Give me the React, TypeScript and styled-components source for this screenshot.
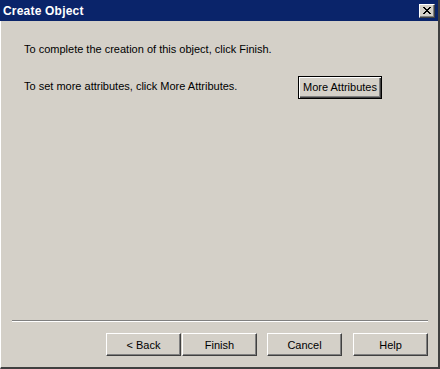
import React from 'react';
import styled, { createGlobalStyle } from 'styled-components';

const GlobalStyle = createGlobalStyle`
  html, body {
    margin: 0;
    padding: 0;
    background: #d4d0c8;
  }
  * {
    box-sizing: border-box;
  }
`;

const Window = styled.div`
  width: 440px;
  height: 369px;
  display: flex;
  flex-direction: column;
  background: #d4d0c8;
  border-left: 1px solid #ffffff;
  border-right: 2px solid #404040;
  border-bottom: 2px solid #404040;
  font-family: 'Liberation Sans', Arial, sans-serif;
  font-size: 11px;
  color: #000;
`;

const TitleBar = styled.div`
  height: 21px;
  margin-left: -1px;
  display: flex;
  align-items: center;
  justify-content: space-between;
  padding: 0 3px 0 3px;
  background: #0a246a;
`;

const Title = styled.span`
  color: #fff;
  font-weight: bold;
  font-size: 12px;
  letter-spacing: 0.2px;
`;

const CloseButton = styled.button`
  width: 16px;
  height: 14px;
  padding: 0;
  display: flex;
  align-items: center;
  justify-content: center;
  background: #d4d0c8;
  border: 1px solid;
  border-color: #fff #404040 #404040 #fff;
  box-shadow: inset -1px -1px 0 #808080;
`;

const Content = styled.div`
  flex: 1;
  padding: 20px 0 0 23px;
  display: flex;
  flex-direction: column;
`;

const Row = styled.div<{ $height: number }>`
  display: flex;
  align-items: center;
  height: ${p => p.$height}px;
`;

const Label = styled.span`
  width: 274px;
  margin-top: -3px;
`;

const Button = styled.button<{ $width?: number; $default?: boolean }>`
  width: ${p => p.$width || 75}px;
  height: 23px;
  padding: 0;
  font-family: 'Liberation Sans', Arial, sans-serif;
  font-size: 11px;
  color: #000;
  background: #d4d0c8;
  border: 1px solid;
  border-color: ${p =>
    p.$default ? '#000' : '#fff #404040 #404040 #fff'};
  box-shadow: ${p =>
    p.$default
      ? 'inset 1px 1px 0 #fff, inset -1px -1px 0 #404040, inset -2px -2px 0 #808080'
      : 'inset -1px -1px 0 #808080'};
`;

const Separator = styled.div`
  margin: 0 10px 0 11px;
  height: 2px;
  border-top: 1px solid #808080;
  border-bottom: 1px solid #ffffff;
`;

const Footer = styled.div`
  height: 45px;
  display: flex;
  align-items: flex-start;
  padding: 11px 10px 0 105px;
`;

const ButtonPair = styled.div`
  display: flex;
  gap: 1px;
`;

const Spacer = styled.div<{ $w: number }>`
  width: ${p => p.$w}px;
`;

const CloseIcon = () => (
  <svg width="8" height="7" viewBox="0 0 8 7">
    <path
      d="M0 0h2v1h1v1h2V1h1V0h2v1H7v1H6v1H5v1h1v1h1v1h1v1H6V6H5V5H3v1H2v1H0V6h1V5h1V4h1V3H2V2H1V1H0z"
      fill="#000"
    />
  </svg>
);

const App = () => (
  <>
    <GlobalStyle />
    <Window>
      <TitleBar>
        <Title>Create Object</Title>
        <CloseButton>
          <CloseIcon />
        </CloseButton>
      </TitleBar>
      <Content>
        <Row $height={16}>
          <span>To complete the creation of this object, click Finish.</span>
        </Row>
        <Row $height={60}>
          <Label>To set more attributes, click More Attributes.</Label>
          <Button $width={84} $default>
            More Attributes
          </Button>
        </Row>
      </Content>
      <Separator />
      <Footer>
        <ButtonPair>
          <Button>&lt; Back</Button>
          <Button>Finish</Button>
        </ButtonPair>
        <Spacer $w={10} />
        <Button>Cancel</Button>
        <Spacer $w={11} />
        <Button>Help</Button>
      </Footer>
    </Window>
  </>
);

export default App;
